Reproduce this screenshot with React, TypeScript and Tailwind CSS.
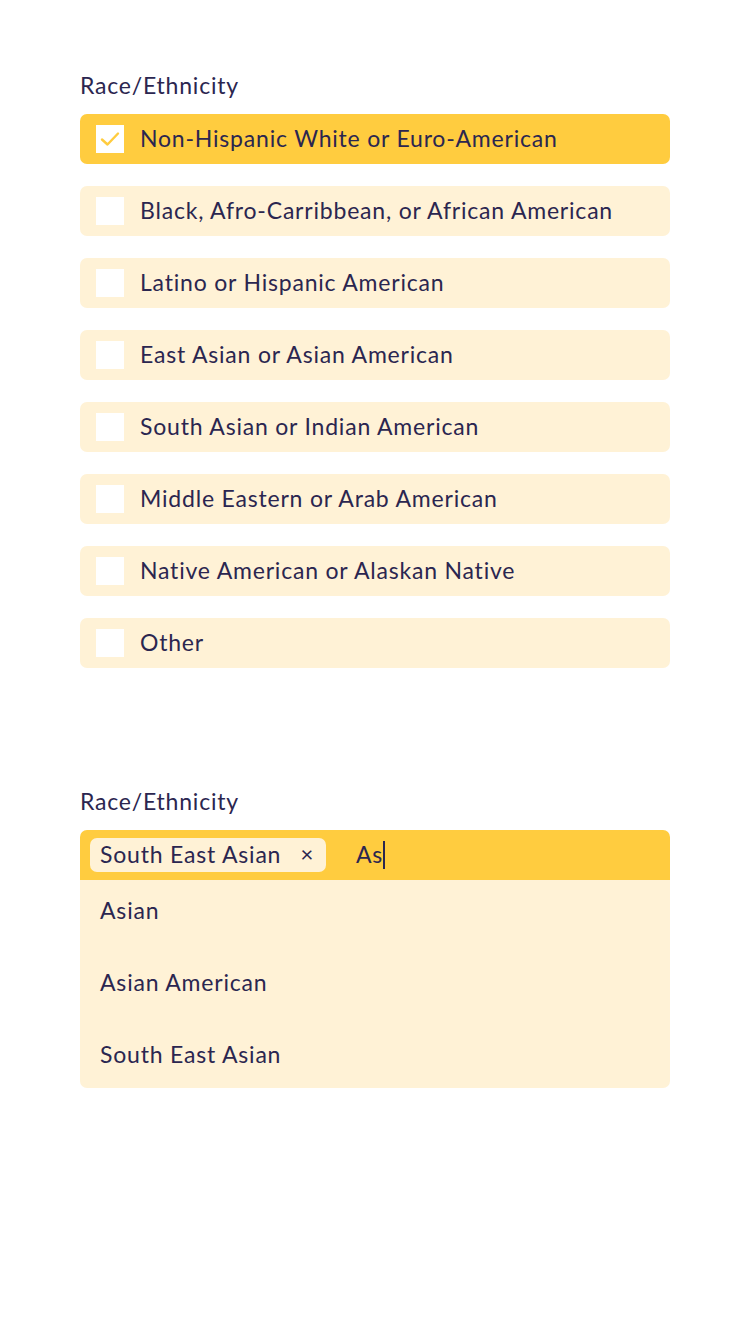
import React from "react";

const options = [
  "Non-Hispanic White or Euro-American",
  "Black, Afro-Carribbean, or African American",
  "Latino or Hispanic American",
  "East Asian or Asian American",
  "South Asian or Indian American",
  "Middle Eastern or Arab American",
  "Native American or Alaskan Native",
  "Other",
];

export default function App() {
  return (
    <div
      className="w-[750px] h-[1334px] bg-white text-[#2b2650] px-[80px] pt-[72px] tracking-[0.8px]"
      style={{ fontFamily: "Lato, 'Open Sans', sans-serif" }}
    >
      <div className="text-[23px] leading-[26px] h-[28px]">Race/Ethnicity</div>
      <div className="mt-[14px] flex flex-col gap-[22px]">
        {options.map((o, i) => (
          <div
            key={o}
            className={`h-[50px] rounded-[7px] flex items-center pl-[16px] ${i === 0 ? "bg-[#ffcc3f]" : "bg-[#fff2d6]"}`}
          >
            <div className="w-[28px] h-[28px] bg-white flex items-center justify-center shrink-0">
              {i === 0 && (
                <svg width="20" height="16" viewBox="0 0 20 16">
                  <path d="M2 8.5 L7.5 13.5 L18 2.5" fill="none" stroke="#ffcc3f" strokeWidth="2.4" strokeLinecap="round" strokeLinejoin="round" />
                </svg>
              )}
            </div>
            <span className="ml-[16px] text-[23px] leading-none pb-[2px]">{o}</span>
          </div>
        ))}
      </div>

      <div className="mt-[120px] text-[23px] leading-[26px] h-[28px]">Race/Ethnicity</div>
      <div className="mt-[14px]">
        <div className="h-[50px] rounded-t-[7px] bg-[#ffcc3f] flex items-center pl-[10px]">
          <div className="h-[34px] w-[236px] rounded-[7px] bg-[#fff2d6] flex items-center pl-[10px] pr-[12px] justify-between">
            <span className="text-[23px] leading-none pb-[2px]">South East Asian</span>
            <span className="text-[22px] leading-none pb-[2px]">×</span>
          </div>
          <span className="ml-[30px] text-[23px] leading-none flex items-center">
            <span className="pb-[2px]">As</span>
            <span className="inline-block w-[2px] h-[28px] bg-[#2b2650]" />
          </span>
        </div>
        <div className="bg-[#fff2d6] rounded-b-[7px] h-[208px] flex flex-col gap-[10px]">
          {["Asian", "Asian American", "South East Asian"].map((s) => (
            <div key={s} className="h-[62px] flex items-center pl-[20px] pb-[2px] text-[23px] leading-none">
              {s}
            </div>
          ))}
        </div>
      </div>
    </div>
  );
}
